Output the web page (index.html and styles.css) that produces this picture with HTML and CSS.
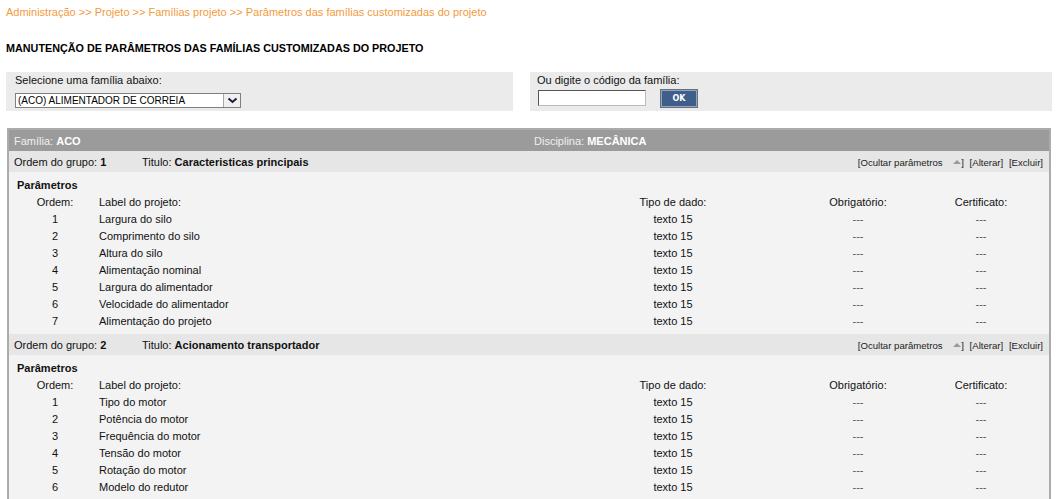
FILE: index.html
```html
<!DOCTYPE html>
<html lang="pt-BR">
<head>
<meta charset="utf-8">
<title>Parâmetros das famílias customizadas do projeto</title>
<link rel="stylesheet" href="styles.css">
</head>
<body>
<div class="crumbs">Administração &gt;&gt; Projeto &gt;&gt; Famílias projeto &gt;&gt; Parâmetros das famílias customizadas do projeto</div>
<h1 class="page-title">MANUTENÇÃO DE PARÂMETROS DAS FAMÍLIAS CUSTOMIZADAS DO PROJETO</h1>

<div class="filters">
  <div class="filter-box filter-left">
    <div class="filter-label">Selecione uma família abaixo:</div>
    <div class="fake-select">
      <span class="fake-select-text">(ACO) ALIMENTADOR DE CORREIA</span>
      <span class="fake-select-btn"><svg width="11" height="7" viewBox="0 0 11 7"><path d="M1.5 1.5 L5.5 5 L9.5 1.5" fill="none" stroke="#1a1a3a" stroke-width="2"/></svg></span>
    </div>
  </div>
  <div class="filter-box filter-right">
    <div class="filter-label">Ou digite o código da família:</div>
    <div class="code-row">
      <input class="code-input" type="text">
      <button class="ok-btn">OK</button>
    </div>
  </div>
</div>

<div class="panel">
  <div class="panel-head">
    <div class="head-cell">Família: <b>ACO</b></div>
    <div class="head-cell">Disciplina: <b>MECÂNICA</b></div>
  </div>

  <div class="group-row">
    <div class="grp-order">Ordem do grupo: <b>1</b></div>
    <div class="grp-title">Titulo: <b>Caracteristicas principais</b></div>
    <div class="grp-links">[Ocultar parâmetros <span class="tri"></span>] <span class="lnk">[Alterar]</span> <span class="lnk">[Excluir]</span></div>
  </div>
  <div class="group-body">
    <div class="params-title">Parâmetros</div>
    <div class="ptable">
      <div class="c1">Ordem:</div><div class="c2">Label do projeto:</div><div class="c3">Tipo de dado:</div><div class="c4">Obrigatório:</div><div class="c5">Certificato:</div>
      <div class="c1">1</div><div class="c2">Largura do silo</div><div class="c3">texto 15</div><div class="c4 dash">---</div><div class="c5 dash">---</div>
      <div class="c1">2</div><div class="c2">Comprimento do silo</div><div class="c3">texto 15</div><div class="c4 dash">---</div><div class="c5 dash">---</div>
      <div class="c1">3</div><div class="c2">Altura do silo</div><div class="c3">texto 15</div><div class="c4 dash">---</div><div class="c5 dash">---</div>
      <div class="c1">4</div><div class="c2">Alimentação nominal</div><div class="c3">texto 15</div><div class="c4 dash">---</div><div class="c5 dash">---</div>
      <div class="c1">5</div><div class="c2">Largura do alimentador</div><div class="c3">texto 15</div><div class="c4 dash">---</div><div class="c5 dash">---</div>
      <div class="c1">6</div><div class="c2">Velocidade do alimentador</div><div class="c3">texto 15</div><div class="c4 dash">---</div><div class="c5 dash">---</div>
      <div class="c1">7</div><div class="c2">Alimentação do projeto</div><div class="c3">texto 15</div><div class="c4 dash">---</div><div class="c5 dash">---</div>
    </div>
  </div>

  <div class="group-row">
    <div class="grp-order">Ordem do grupo: <b>2</b></div>
    <div class="grp-title">Titulo: <b>Acionamento transportador</b></div>
    <div class="grp-links">[Ocultar parâmetros <span class="tri"></span>] <span class="lnk">[Alterar]</span> <span class="lnk">[Excluir]</span></div>
  </div>
  <div class="group-body">
    <div class="params-title">Parâmetros</div>
    <div class="ptable">
      <div class="c1">Ordem:</div><div class="c2">Label do projeto:</div><div class="c3">Tipo de dado:</div><div class="c4">Obrigatório:</div><div class="c5">Certificato:</div>
      <div class="c1">1</div><div class="c2">Tipo do motor</div><div class="c3">texto 15</div><div class="c4 dash">---</div><div class="c5 dash">---</div>
      <div class="c1">2</div><div class="c2">Potência do motor</div><div class="c3">texto 15</div><div class="c4 dash">---</div><div class="c5 dash">---</div>
      <div class="c1">3</div><div class="c2">Frequência do motor</div><div class="c3">texto 15</div><div class="c4 dash">---</div><div class="c5 dash">---</div>
      <div class="c1">4</div><div class="c2">Tensão do motor</div><div class="c3">texto 15</div><div class="c4 dash">---</div><div class="c5 dash">---</div>
      <div class="c1">5</div><div class="c2">Rotação do motor</div><div class="c3">texto 15</div><div class="c4 dash">---</div><div class="c5 dash">---</div>
      <div class="c1">6</div><div class="c2">Modelo do redutor</div><div class="c3">texto 15</div><div class="c4 dash">---</div><div class="c5 dash">---</div>
    </div>
  </div>
</div>
</body>
</html>
```

FILE: styles.css
```css
html, body {
  margin: 0;
  padding: 0;
  background: #fff;
}
body {
  font-family: "Liberation Sans", Arial, sans-serif;
  font-size: 11px;
  color: #111;
  overflow: hidden;
}
.crumbs {
  padding: 5px 6px 0;
  line-height: 14px;
  color: #f39a3c;
}
.page-title {
  margin: 22px 0 0 6px;
  font-size: 10.8px;
  line-height: 14px;
  font-weight: bold;
  color: #000;
}
.filters {
  display: flex;
  gap: 17px;
  margin: 17px 10px 0 6px;
  height: 39px;
}
.filter-box {
  background: #ebebeb;
  box-sizing: border-box;
}
.filter-left {
  width: 507px;
  padding: 1px 0 0 9px;
}
.filter-right {
  flex: 1;
  padding: 1px 0 0 7px;
}
.filter-label {
  line-height: 14px;
}
.fake-select {
  margin-top: 6px;
  width: 226px;
  height: 15px;
  box-sizing: border-box;
  border: 1px solid #7f7f7f;
  background: #fff;
  display: flex;
  align-items: stretch;
}
.fake-select-text {
  flex: 1;
  font-size: 10px;
  line-height: 13px;
  padding-left: 2px;
  color: #000;
}
.fake-select-btn {
  width: 16px;
  background: #f0f0f0;
  border-left: 1px solid #a8a8a8;
  display: flex;
  align-items: center;
  justify-content: center;
}
.code-row {
  display: flex;
  align-items: flex-end;
  gap: 14px;
  margin-top: 2px;
}
.code-input {
  width: 108px;
  height: 16px;
  box-sizing: border-box;
  border: 1px solid #555;
  border-right-color: #bbb;
  border-bottom-color: #bbb;
  margin: 0 0 2px 1px;
  padding: 0;
  background: #fff;
}
.ok-btn {
  width: 38px;
  height: 19px;
  padding: 0;
  background: #3f5e8c;
  color: #fff;
  font-family: "DejaVu Sans", sans-serif;
  font-weight: bold;
  font-size: 8px;
  border: 1px solid #6e6e6e;
  box-shadow: inset 0 0 0 1px #8fa6c6;
}
.panel {
  margin: 17px 11px 0 7px;
  border: 2px solid #ababab;
  border-bottom: none;
  background: #f3f3f3;
}
.panel-head {
  display: flex;
  background: #9b9b9b;
  height: 21px;
  align-items: center;
  color: #f0f0f0;
}
.head-cell {
  width: 50%;
  padding-left: 5px;
}
.head-cell b {
  color: #fff;
}
.group-row {
  display: flex;
  align-items: center;
  height: 21px;
  padding: 1px 6px 0 5px;
  box-sizing: border-box;
  background: #e6e6e6;
}
.grp-order {
  width: 128px;
}
.grp-title {
  flex: 1;
}
.grp-links {
  font-size: 9.6px;
  color: #222;
}
.lnk {
  margin-left: 3px;
}
.tri {
  display: inline-block;
  width: 0;
  height: 0;
  border-left: 4px solid transparent;
  border-right: 4px solid transparent;
  border-bottom: 4px solid #999;
  margin: 0 0 2px 8px;
  vertical-align: middle;
}
.group-body {
  padding: 5px 0 4px 0;
}
.params-title {
  padding-left: 8px;
  line-height: 17px;
  font-weight: bold;
}
.ptable {
  display: grid;
  grid-template-columns: 76px 527px 106px 190px 130px;
  padding-left: 8px;
  line-height: 17px;
}
.c1, .c3, .c4, .c5 {
  text-align: center;
}
.c2 {
  padding-left: 6px;
}
.c4 {
  padding-left: 74px;
}
.dash {
  color: #555;
}
```
